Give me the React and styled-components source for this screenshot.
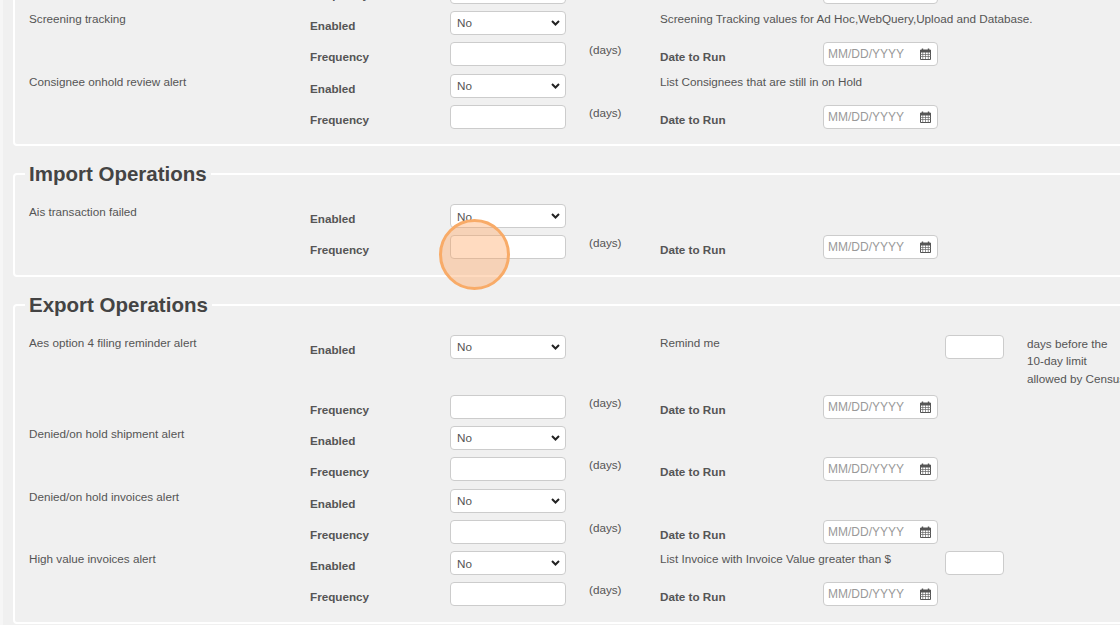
import React from 'react';
import styled, { createGlobalStyle } from 'styled-components';

const GlobalStyle = createGlobalStyle`
  html, body {
    margin: 0;
    height: 100%;
    overflow: hidden;
    background: #f0f0f0;
  }
  body {
    font-family: "Liberation Sans", Arial, sans-serif;
    font-size: 11.7px;
    color: #555;
  }
`;

const Page = styled.div`
  position: relative;
  width: 1120px;
  height: 625px;
  overflow: hidden;
  box-sizing: border-box;
  padding-left: 10px;
  border-left: 3px solid #f6f6f6;
`;

const Scroller = styled.div`
  width: 1260px;
  margin-top: -40.4px;
  display: flex;
  flex-direction: column;
  gap: 16px;
`;

const Section = styled.fieldset`
  margin: 0;
  padding: 18px 0 8px 14px;
  border: 2px solid #fff;
  border-radius: 4px;
  min-width: 0;
`;

const Legend = styled.legend`
  margin-left: -4px;
  padding: 0 4px;
  font-size: 20.5px;
  line-height: 24px;
  font-weight: bold;
  color: #444;
`;

const Row = styled.div`
  display: grid;
  grid-template-columns: 281px 140px 139px 71px 163px 122px 82px 200px;
  min-height: 31.3px;
`;

const Name = styled.div`
  line-height: 14px;
  padding-top: 1px;
`;

const Label = styled.div`
  grid-column: 2;
  font-weight: bold;
  line-height: 14px;
  padding-top: 8px;
`;

const Control = styled.div`
  grid-column: ${(p) => p.$column || 3};
`;

const chevron = encodeURIComponent(
  '<svg xmlns="http://www.w3.org/2000/svg" width="9" height="6" viewBox="0 0 9 6"><path d="M1 1l3.5 3.5L8 1" fill="none" stroke="#222" stroke-width="2"/></svg>'
);

const Select = styled.select`
  display: block;
  box-sizing: border-box;
  width: 116px;
  height: 24px;
  padding: 0 6px;
  appearance: none;
  background: #fff url("data:image/svg+xml,${chevron}") no-repeat right 5px center;
  border: 1px solid #ccc;
  border-radius: 4px;
  font: 11.7px "Liberation Sans", Arial, sans-serif;
  color: #555;
`;

const TextInput = styled.input`
  display: block;
  box-sizing: border-box;
  width: ${(p) => p.$width || 116}px;
  height: 24px;
  padding: 0 4px;
  background: #fff;
  border: 1px solid #ccc;
  border-radius: 4px;
`;

const Days = styled.div`
  grid-column: 4;
  padding-top: 1px;
  line-height: 14px;
`;

const Note = styled.div`
  grid-column: 5 / span 2;
  line-height: 14px;
  padding-top: 1px;
  white-space: nowrap;
`;

const Remark = styled.div`
  grid-column: 8;
  padding: 0 0 7.5px;
  line-height: 17.5px;
  white-space: nowrap;
`;

const RunLabel = styled(Label)`
  grid-column: 5;
`;

const DateBox = styled.div`
  grid-column: 6;
  display: flex;
  align-items: center;
  justify-content: space-between;
  box-sizing: border-box;
  width: 115px;
  height: 24px;
  padding: 0 6px 0 4px;
  background: #fff;
  border: 1px solid #ccc;
  border-radius: 4px;
`;

const DateInput = styled.input`
  width: 80px;
  padding: 0;
  border: 0;
  outline: 0;
  background: transparent;
  font: 12px "Liberation Sans", Arial, sans-serif;
  &::placeholder {
    color: #999;
    opacity: 1;
  }
`;

const Highlight = styled.div`
  position: absolute;
  left: 436px;
  top: 219px;
  box-sizing: border-box;
  width: 71px;
  height: 71px;
  border-radius: 50%;
  background: rgba(255, 160, 90, 0.38);
  border: 3px solid #f8ab68;
`;

const CalendarIcon = () => (
  <svg width="11" height="12" viewBox="0 0 11 12" fill="none">
    <path d="M0.5 2h10v9.5h-10z" fill="#fff" stroke="#555" />
    <path d="M0 2h11v2.5H0z" fill="#555" />
    <path d="M2.5 0.5v2M8.5 0.5v2" stroke="#555" strokeWidth="1.4" />
    <path d="M0 6.5h11M0 8.5h11M2.75 4v7M5.5 4v7M8.25 4v7" stroke="#666" strokeWidth="0.7" />
  </svg>
);

const FrequencyRow = () => (
  <Row>
    <Label>Frequency</Label>
    <Control>
      <TextInput />
    </Control>
    <Days>(days)</Days>
    <RunLabel>Date to Run</RunLabel>
    <DateBox>
      <DateInput type="text" placeholder="MM/DD/YYYY" />
      <CalendarIcon />
    </DateBox>
  </Row>
);

const Alert = ({ name, note, extra, remark }) => (
  <>
    <Row>
      <Name>{name}</Name>
      <Label>Enabled</Label>
      <Control>
        <Select defaultValue="No">
          <option>No</option>
          <option>Yes</option>
        </Select>
      </Control>
      {note && <Note>{note}</Note>}
      {extra && (
        <Control $column={7}>
          <TextInput $width={59} />
        </Control>
      )}
      {remark && (
        <Remark>
          {remark.map((line) => (
            <div key={line}>{line}</div>
          ))}
        </Remark>
      )}
    </Row>
    <FrequencyRow />
  </>
);

const App = () => (
  <Page>
    <GlobalStyle />
    <Scroller>
      <Section>
        <FrequencyRow />
        <Alert
          name="Screening tracking"
          note="Screening Tracking values for Ad Hoc,WebQuery,Upload and Database."
        />
        <Alert name="Consignee onhold review alert" note="List Consignees that are still in on Hold" />
      </Section>
      <Section>
        <Legend>Import Operations</Legend>
        <Alert name="Ais transaction failed" />
      </Section>
      <Section>
        <Legend>Export Operations</Legend>
        <Alert
          name="Aes option 4 filing reminder alert"
          note="Remind me"
          extra
          remark={['days before the', '10-day limit', 'allowed by Census']}
        />
        <Alert name="Denied/on hold shipment alert" />
        <Alert name="Denied/on hold invoices alert" />
        <Alert
          name="High value invoices alert"
          note="List Invoice with Invoice Value greater than $"
          extra
        />
      </Section>
    </Scroller>
    <Highlight />
  </Page>
);

export default App;
